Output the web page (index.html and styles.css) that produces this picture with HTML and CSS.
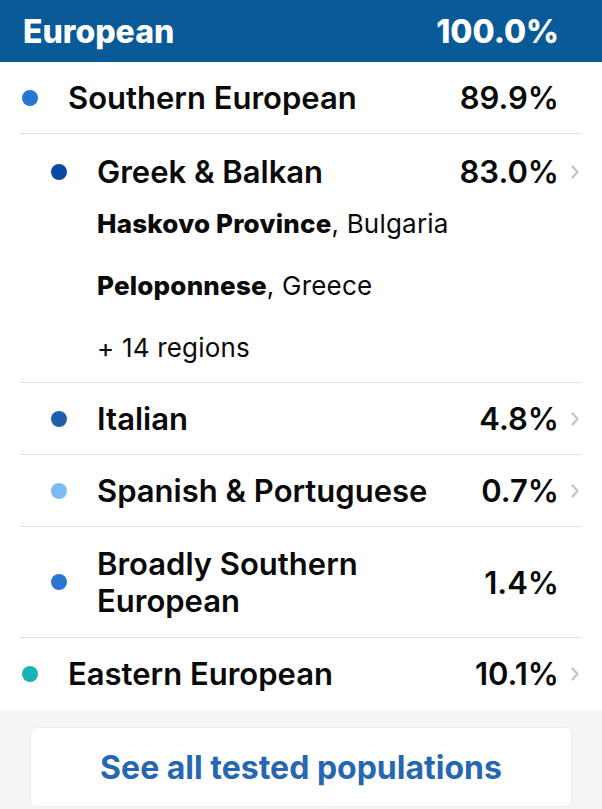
FILE: index.html
```html
<!DOCTYPE html>
<html lang="en">
<head>
<meta charset="utf-8">
<title>Ancestry breakdown</title>
<link rel="stylesheet" href="styles.css">
</head>
<body>
<div class="panel">
  <div class="header">
    <span class="header-name">European</span>
    <span class="header-pct">100.0%</span>
  </div>
  <ul class="list">
    <li class="row level-1">
      <div class="line">
        <span class="dot dot-southern"></span>
        <span class="name">Southern European</span>
        <span class="pct">89.9%</span>
        <span class="chev"></span>
      </div>
    </li>
    <li class="row level-2 row-greek">
      <div class="line">
        <span class="dot dot-greek"></span>
        <span class="name">Greek &amp; Balkan</span>
        <span class="pct">83.0%</span>
        <span class="chev"><svg viewBox="0 0 8 14" width="8" height="14"><polyline points="1.5,1.5 6.5,7 1.5,12.5" /></svg></span>
      </div>
      <div class="regions">
        <div class="region"><b>Haskovo Province</b>, Bulgaria</div>
        <div class="region"><b>Peloponnese</b>, Greece</div>
        <div class="region">+ 14 regions</div>
      </div>
    </li>
    <li class="row level-2">
      <div class="line">
        <span class="dot dot-italian"></span>
        <span class="name">Italian</span>
        <span class="pct">4.8%</span>
        <span class="chev"><svg viewBox="0 0 8 14" width="8" height="14"><polyline points="1.5,1.5 6.5,7 1.5,12.5" /></svg></span>
      </div>
    </li>
    <li class="row level-2">
      <div class="line">
        <span class="dot dot-spanish"></span>
        <span class="name">Spanish &amp; Portuguese</span>
        <span class="pct">0.7%</span>
        <span class="chev"><svg viewBox="0 0 8 14" width="8" height="14"><polyline points="1.5,1.5 6.5,7 1.5,12.5" /></svg></span>
      </div>
    </li>
    <li class="row level-2 row-broad">
      <div class="line">
        <span class="dot dot-broad"></span>
        <span class="name">Broadly Southern<br>European</span>
        <span class="pct">1.4%</span>
        <span class="chev"></span>
      </div>
    </li>
    <li class="row level-1 row-last">
      <div class="line">
        <span class="dot dot-eastern"></span>
        <span class="name">Eastern European</span>
        <span class="pct">10.1%</span>
        <span class="chev"><svg viewBox="0 0 8 14" width="8" height="14"><polyline points="1.5,1.5 6.5,7 1.5,12.5" /></svg></span>
      </div>
    </li>
  </ul>
  <div class="footer">
    <div class="card">See all tested populations</div>
  </div>
</div>
</body>
</html>
```

FILE: styles.css
```css
* { box-sizing: border-box; }
html, body {
  margin: 0;
  padding: 0;
  background: #ffffff;
}
body {
  font-family: Inter, "Noto Sans", "Liberation Sans", sans-serif;
  color: #0a0a0a;
  width: 602px;
  height: 809px;
  overflow: hidden;
}
.panel {
  display: flex;
  flex-direction: column;
}
.header {
  height: 62px;
  background: #0b5a98;
  color: #ffffff;
  display: flex;
  align-items: center;
  justify-content: space-between;
  padding: 1px 43px 0 23px;
  font-size: 32px;
  font-weight: 800;
}
.list {
  list-style: none;
  margin: 0;
  padding: 0 20px;
}
.row {
  border-bottom: 1px solid #e2e2e4;
  padding: 18px 0;
}
.row-last {
  border-bottom: none;
  padding-bottom: 19px;
}
.line {
  display: flex;
  align-items: center;
  font-size: 31px;
  font-weight: 600;
  line-height: 35px;
}
.level-1 .line { padding-left: 2px; }
.level-2 .line { padding-left: 31px; }
.row-greek { padding-top: 20px; padding-bottom: 20px; }
.row-broad .line { line-height: 37px; }
.dot {
  width: 16px;
  height: 16px;
  border-radius: 50%;
  flex: none;
  margin-right: 30px;
}
.dot-southern { background: #2a74d3; }
.dot-greek { background: #0b4aa3; }
.dot-italian { background: #1f5eaa; }
.dot-spanish { background: #7cbaf2; }
.dot-broad { background: #2a74d3; }
.dot-eastern { background: #17b2b4; }
.name {
  flex: 1;
}
.pct {
  flex: none;
  text-align: right;
}
.chev {
  flex: none;
  width: 23px;
  height: 14px;
  display: flex;
  justify-content: flex-end;
  padding-right: 3px;
}
.chev svg {
  display: block;
}
.chev polyline {
  fill: none;
  stroke: #c4c4c7;
  stroke-width: 2.2;
  stroke-linecap: round;
  stroke-linejoin: round;
}
.regions {
  padding-left: 77px;
  padding-top: 20px;
  display: flex;
  flex-direction: column;
  gap: 33px;
}
.region {
  font-size: 26px;
  line-height: 29px;
  font-weight: 400;
  letter-spacing: 0.2px;
}
.region b {
  font-weight: 800;
}
.footer {
  background: #f4f5f7;
  padding: 17px 30px 0 30px;
  height: 100px;
}
.card {
  background: #ffffff;
  border: 1px solid #ececee;
  border-radius: 6px;
  height: 80px;
  display: flex;
  align-items: center;
  justify-content: center;
  font-size: 32px;
  font-weight: 700;
  color: #2767b1;
}
```
